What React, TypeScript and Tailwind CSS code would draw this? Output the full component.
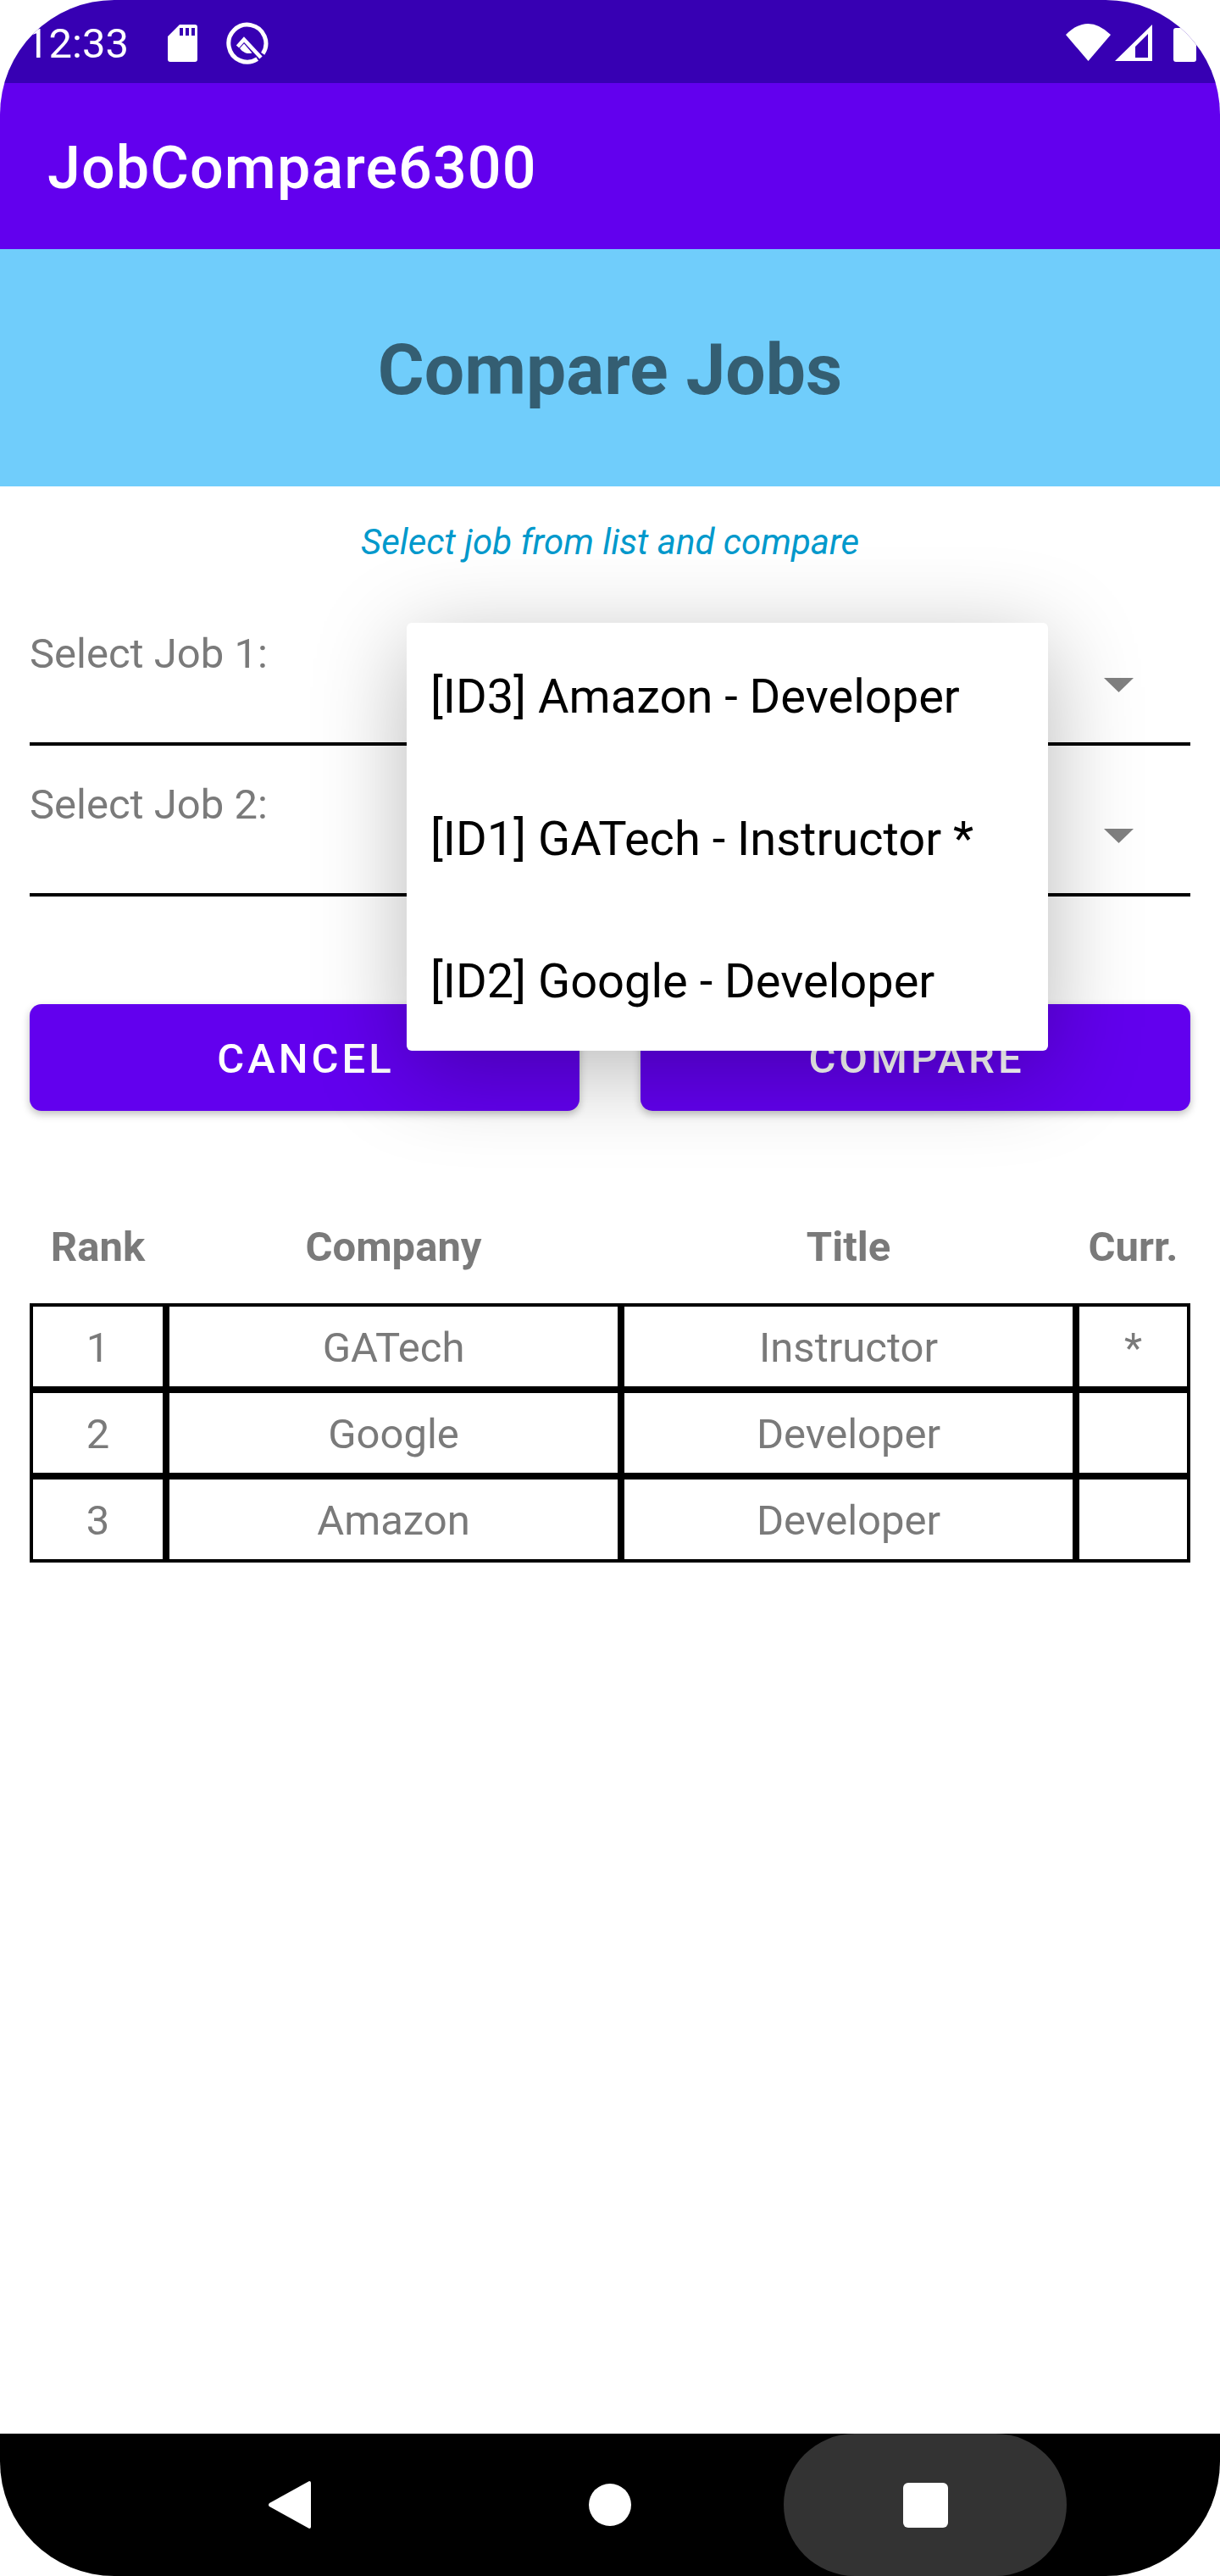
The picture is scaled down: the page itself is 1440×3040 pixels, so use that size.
import React from "react";

const rows = [
  ["1", "GATech", "Instructor", "*"],
  ["2", "Google", "Developer", ""],
  ["3", "Amazon", "Developer", ""],
];
const headers = ["Rank", "Company", "Title", "Curr."];
const options = ["[ID3] Amazon - Developer", "[ID1] GATech - Instructor *", "[ID2] Google - Developer"];

function SelectRow({ label }: { label: string }) {
  return (
    <div className="relative h-[178px] border-b-4 border-black pt-[41px]">
      <span className="block text-[49px] leading-[58px] text-[#7a7a7a]">{label}</span>
      <svg className="absolute right-[67px] top-[98px]" width="35" height="17" viewBox="0 0 35 17">
        <path d="M0 0H35L17.5 17Z" fill="#808080" />
      </svg>
    </div>
  );
}

function StatusBar() {
  return (
    <div className="flex h-[98px] shrink-0 items-start bg-[#3700b3] text-white">
      <span className="ml-[30px] mt-[23px] w-[168px] text-[49px] leading-[58px]">12:33</span>
      <svg className="mt-[29px]" width="35" height="44" viewBox="0 0 35 44">
        <path
          fill="#fff"
          fillRule="evenodd"
          d="M14 0H32a3 3 0 0 1 3 3V41a3 3 0 0 1-3 3H3a3 3 0 0 1-3-3V14ZM14 4V13H18V4ZM21 4V13H25V4ZM28 4V13H32V4Z"
        />
      </svg>
      <svg className="ml-[34px] mt-[26px]" width="50" height="50" viewBox="0 0 50 50">
        <path d="M36.7 43.7A22 22 0 1 1 43.2 37.3" fill="none" stroke="#fff" strokeWidth="5" />
        <path d="M13.5 29L21 20.5L41 42" fill="none" stroke="#fff" strokeWidth="4.5" />
        <path d="M16 31L21 25.5L30.5 36.5A13 13 0 0 1 16 31Z" fill="#fff" />
      </svg>
      <svg className="ml-auto mt-[28px]" width="53" height="44" viewBox="0 0 53 44">
        <path d="M0 13Q26-13 53 13L26.5 44Z" fill="#fff" />
      </svg>
      <svg className="ml-[5px] mt-[29px]" width="44" height="43" viewBox="0 0 44 43">
        <path fill="#fff" fillRule="evenodd" d="M44 0V43H0ZM39 11L24 26V39H39Z" />
      </svg>
      <div className="ml-[25px] mr-[28px] mt-[33px] h-[40px] w-[27px] rounded-[3px] bg-white" />
    </div>
  );
}

function NavBar() {
  return (
    <div className="mt-auto flex h-[168px] shrink-0 items-center bg-black">
      <svg className="ml-[317px]" width="50" height="56" viewBox="0 0 50 56">
        <path d="M48 0a2 2 0 0 1 2 2V54a2 2 0 0 1-2 2L1 30a2.5 2.5 0 0 1 0-4Z" fill="#fff" />
      </svg>
      <div className="ml-[328px] h-[50px] w-[50px] rounded-full bg-white" />
      <div className="ml-[180px] flex h-[168px] w-[334px] items-center justify-center rounded-full bg-[#333333]">
        <div className="h-[53px] w-[53px] rounded-[6px] bg-white" />
      </div>
    </div>
  );
}

export default function App() {
  return (
    <div
      className="relative flex h-[3040px] w-[1440px] flex-col overflow-hidden rounded-[135px] bg-white"
      style={{ fontFamily: "Roboto, sans-serif" }}
    >
      <StatusBar />
      <div className="flex h-[196px] shrink-0 items-center bg-[#6200ee] pl-[56px] pt-[5px] text-[70px] font-medium tracking-[1.1px] text-white">
        JobCompare6300
      </div>
      <div className="flex h-[280px] shrink-0 items-center justify-center bg-[#70cdfb] pt-[6px] text-[84px] font-bold text-[#345e72]">
        Compare Jobs
      </div>
      <p className="mt-[41px] text-center text-[42px] leading-[50px] italic text-[#0099cc]">
        Select job from list and compare
      </p>
      <div className="mx-[35px] mt-[37px] flex flex-col">
        <SelectRow label="Select Job 1:" />
        <SelectRow label="Select Job 2:" />
      </div>
      <div className="mx-[35px] mt-[127px] flex gap-[72px]">
        <button className="h-[126px] flex-1 rounded-[14px] bg-[#6200ee] pl-[3px] pt-[3px] text-[49px] font-medium tracking-[4px] text-white shadow-[0_4px_10px_rgba(0,0,0,0.25)]">
          CANCEL
        </button>
        <button className="h-[126px] flex-1 rounded-[14px] bg-[#6200ee] pl-[3px] pt-[3px] text-[49px] font-medium tracking-[4px] text-white shadow-[0_4px_10px_rgba(0,0,0,0.25)]">
          COMPARE
        </button>
      </div>
      <div className="mx-[35px] mt-[132px] grid grid-cols-[161px_537px_537px_135px]">
        {headers.map((h) => (
          <div key={h} className="mb-[37px] text-center text-[49px] font-bold leading-[58px] text-[#7a7a7a]">
            {h}
          </div>
        ))}
        {rows.flat().map((c, i) => (
          <div
            key={i}
            className="flex h-[102px] items-center justify-center border-4 border-black pt-[3px] text-[49px] text-[#7a7a7a]"
          >
            {c}
          </div>
        ))}
      </div>
      <NavBar />
      <div className="absolute left-[480px] top-[735px] w-[757px] rounded-[6px] bg-white pb-px shadow-[0_24px_110px_rgba(0,0,0,0.28)]">
        {options.map((o) => (
          <div key={o} className="flex h-[168px] items-center pl-[28px] pt-[5px] text-[56px] text-black">
            {o}
          </div>
        ))}
      </div>
    </div>
  );
}
